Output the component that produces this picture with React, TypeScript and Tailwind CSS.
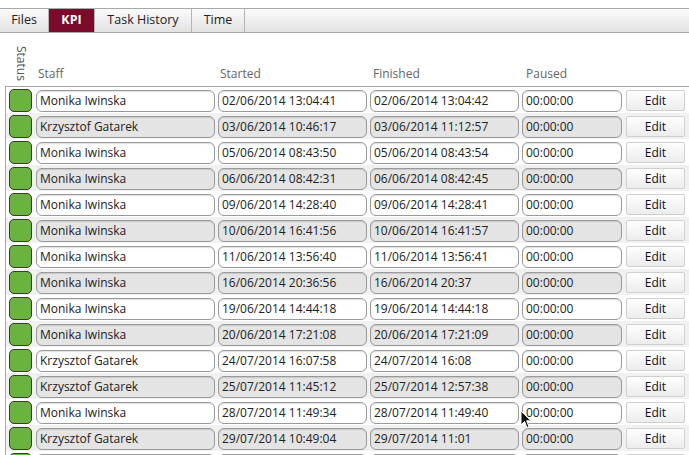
import type { ReactNode } from 'react'

// Elenco KPI: righe alternate con campi arrotondati e pulsante Edit.

type Row = { staff: string; started: string; finished: string; paused: string }

const rows: Row[] = [
  { staff: 'Monika Iwinska', started: '02/06/2014 13:04:41', finished: '02/06/2014 13:04:42', paused: '00:00:00' },
  { staff: 'Krzysztof Gatarek', started: '03/06/2014 10:46:17', finished: '03/06/2014 11:12:57', paused: '00:00:00' },
  { staff: 'Monika Iwinska', started: '05/06/2014 08:43:50', finished: '05/06/2014 08:43:54', paused: '00:00:00' },
  { staff: 'Monika Iwinska', started: '06/06/2014 08:42:31', finished: '06/06/2014 08:42:45', paused: '00:00:00' },
  { staff: 'Monika Iwinska', started: '09/06/2014 14:28:40', finished: '09/06/2014 14:28:41', paused: '00:00:00' },
  { staff: 'Monika Iwinska', started: '10/06/2014 16:41:56', finished: '10/06/2014 16:41:57', paused: '00:00:00' },
  { staff: 'Monika Iwinska', started: '11/06/2014 13:56:40', finished: '11/06/2014 13:56:41', paused: '00:00:00' },
  { staff: 'Monika Iwinska', started: '16/06/2014 20:36:56', finished: '16/06/2014 20:37', paused: '00:00:00' },
  { staff: 'Monika Iwinska', started: '19/06/2014 14:44:18', finished: '19/06/2014 14:44:18', paused: '00:00:00' },
  { staff: 'Monika Iwinska', started: '20/06/2014 17:21:08', finished: '20/06/2014 17:21:09', paused: '00:00:00' },
  { staff: 'Krzysztof Gatarek', started: '24/07/2014 16:07:58', finished: '24/07/2014 16:08', paused: '00:00:00' },
  { staff: 'Krzysztof Gatarek', started: '25/07/2014 11:45:12', finished: '25/07/2014 12:57:38', paused: '00:00:00' },
  { staff: 'Monika Iwinska', started: '28/07/2014 11:49:34', finished: '28/07/2014 11:49:40', paused: '00:00:00' },
  { staff: 'Krzysztof Gatarek', started: '29/07/2014 10:49:04', finished: '29/07/2014 11:01', paused: '00:00:00' },
  { staff: '', started: '', finished: '', paused: '' },
]

const tabs = [
  { label: 'Files', w: 'w-[49px]' },
  { label: 'KPI', w: 'w-[46px]' },
  { label: 'Task History', w: 'w-[97px]' },
  { label: 'Time', w: 'w-[53px]' },
]

function Field({ w, gray, children }: { w: string; gray: boolean; children: ReactNode }) {
  return (
    <div
      className={`${w} h-[22px] shrink-0 rounded-[6px] border border-[#9a9a9a] px-[3px] flex items-center text-[12px] text-[#222] overflow-hidden whitespace-nowrap shadow-[inset_0_1px_1px_rgba(0,0,0,0.12)] ${
        gray ? 'bg-[#e4e4e4]' : 'bg-white'
      }`}
    >
      {children}
    </div>
  )
}

export default function App() {
  return (
    <div className="w-[689px] h-[455px] overflow-hidden bg-white relative" style={{ fontFamily: '"Open Sans", "Liberation Sans", sans-serif' }}>
      <div className="h-2" />
      <div className="h-[25px] flex border-y border-[#a9a9a9] bg-gradient-to-b from-[#fbfbfb] to-[#e2e2e2]">
        {tabs.map((t) => (
          <div
            key={t.label}
            className={`${t.w} h-full flex items-center justify-center border-r border-[#b5b5b5] text-[12.5px] ${
              t.label === 'KPI' ? 'bg-[#7a0b2b] text-white font-bold' : 'text-[#222]'
            }`}
          >
            {t.label}
          </div>
        ))}
      </div>

      <div className="h-[53px] flex items-end pl-[5px] text-[12px] text-[#666]">
        <div className="w-[31px] h-full flex justify-center pt-[13px]">
          <span className="[writing-mode:vertical-rl] leading-none h-fit text-[#555]">Status</span>
        </div>
        <div className="w-[184px] pb-[3px] pl-[2px]">Staff</div>
        <div className="w-[153px] pb-[3px]">Started</div>
        <div className="w-[153px] pb-[3px]">Finished</div>
        <div className="pb-[3px]">Paused</div>
      </div>

      <div className="ml-[5px] border-t border-l border-[#a9a9a9]">
        {rows.map((r, i) => {
          const gray = i % 2 === 1
          return (
            <div key={i} className={`h-[26px] flex items-center pl-[3px] pt-px ${gray ? 'bg-[#f1f1f1]' : 'bg-white'}`}>
              <div className="w-[23px] h-[23px] shrink-0 rounded-[5px] border border-[#3a3a3a] bg-[#6ab33f] mr-[4px]" />
              <Field w="w-[179px]" gray={gray}>{r.staff}</Field>
              <div className="w-[3px]" />
              <Field w="w-[149px]" gray={gray}>{r.started}</Field>
              <div className="w-[3px]" />
              <Field w="w-[149px]" gray={gray}>{r.finished}</Field>
              <div className="w-[3px]" />
              <Field w="w-[100px]" gray={gray}>{r.paused}</Field>
              <div className="w-[4px]" />
              <button className="w-[59px] h-[21px] shrink-0 rounded-[2px] border border-[#d0d0d0] bg-gradient-to-b from-white to-[#ececec] text-[12px] text-[#111]">
                {r.staff ? 'Edit' : ''}
              </button>
            </div>
          )
        })}
      </div>

      <svg className="absolute left-[520px] top-[410px]" width="12" height="19" viewBox="0 0 12 19">
        <path d="M1 1 L1 15 L4.5 11.5 L7 17.5 L9 16.6 L6.6 10.8 L11 10.8 Z" fill="#111" stroke="#fff" strokeWidth="1" strokeLinejoin="round" />
      </svg>
    </div>
  )
}
